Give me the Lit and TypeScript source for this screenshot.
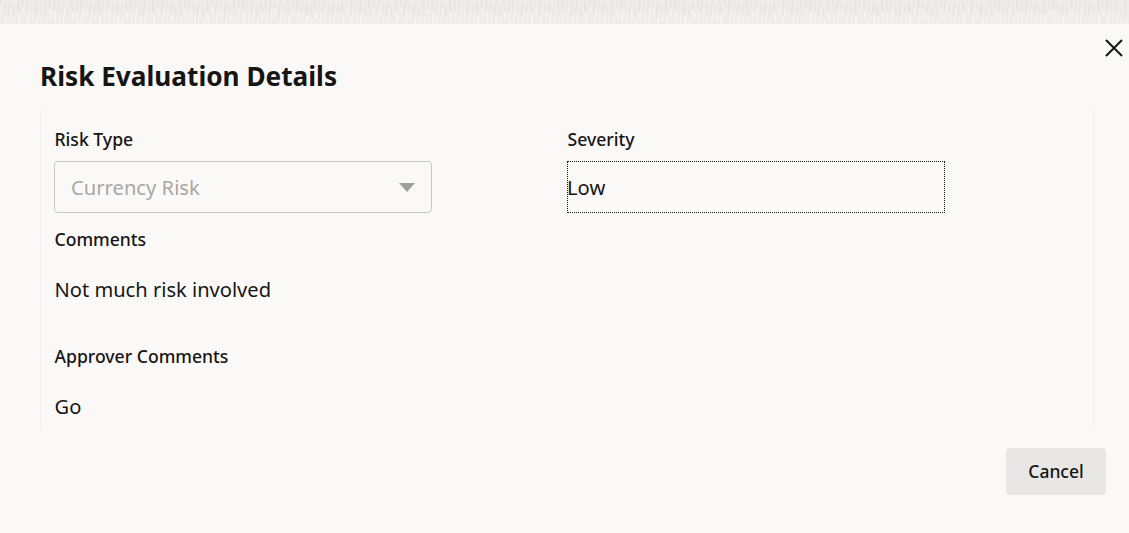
import { LitElement, html, svg, css } from 'lit';
import { customElement } from 'lit/decorators.js';

// rough stand-in for the page texture behind the dialog
const marks = Array.from({ length: 376 }, (_, i) => {
  const x = i * 3 + (i * 7) % 3;
  const y = ((i * 13) % 9) - 2;
  const h = 6 + (i * 5) % 7;
  return { x, y, h, second: y + h + 3 + (i * 3) % 3 };
});

@customElement('app-root')
export class AppRoot extends LitElement {
  static styles = css`
    :host {
      display: block;
      width: 1129px;
      height: 533px;
      overflow: hidden;
      font-family: "Noto Sans", "Open Sans", sans-serif;
      color: #161513;
      background: #fbf9f8;
    }
    .texture {
      display: block;
      width: 1129px;
      height: 24px;
      background: #efedeb;
    }
    .dialog {
      position: relative;
      height: 509px;
      box-sizing: border-box;
      padding: 34px 22px 0 40px;
      background: #fbf9f8;
    }
    .close {
      position: absolute;
      top: 15px;
      right: 6px;
      width: 18px;
      height: 18px;
      color: #161513;
    }
    h1 {
      margin: 0;
      font-size: 26.2px;
      line-height: 36px;
      font-weight: 700;
    }
    .body {
      margin-top: 15px;
      width: 1054px;
      height: 320px;
      box-sizing: border-box;
      padding: 0 13px;
      border-left: 1px solid #f1efed;
      border-right: 1px solid #f1efed;
    }
    .row {
      display: grid;
      grid-template-columns: 378px 378px;
      column-gap: 135px;
      padding-top: 19px;
    }
    label {
      display: block;
      font-size: 17.6px;
      line-height: 22px;
      font-weight: 500;
      padding-left: 0.5px;
    }
    .select {
      display: flex;
      align-items: center;
      justify-content: space-between;
      box-sizing: border-box;
      height: 52px;
      margin-top: 11px;
      padding: 0 16px;
      border: 1px solid #c9c7c5;
      border-radius: 4px;
      font-size: 20.2px;
      color: #a9a7a5;
    }
    .arrow {
      width: 16px;
      height: 9px;
      fill: #a09e9c;
    }
    .readonly {
      box-sizing: border-box;
      height: 52px;
      margin-top: 11px;
      border: 1px dotted #161513;
      display: flex;
      align-items: center;
      font-size: 20.2px;
      text-indent: -1px;
    }
    .block {
      margin-top: 15px;
    }
    .value {
      font-size: 20.1px;
      line-height: 28px;
      margin-top: 26px;
      padding-left: 0.5px;
    }
    .block.approver {
      margin-top: 41px;
    }
    .footer {
      display: flex;
      justify-content: flex-end;
      margin-top: 19px;
      padding-right: 1px;
    }
    button {
      width: 100px;
      height: 47px;
      border: none;
      border-radius: 4px;
      background: #e9e7e5;
      color: #161513;
      font: 500 17.5px "Noto Sans", "Open Sans", sans-serif;
      padding: 0 0 2px;
    }
  `;

  render() {
    return html`
      <svg class="texture" viewBox="0 0 1129 24">
        ${marks.map(
          (m) => svg`
            <rect x=${m.x} y=${m.y} width="1.4" height=${m.h} fill="#e7e5e3"></rect>
            <rect x=${m.x + 1} y=${m.second} width="1.2" height=${m.h} fill="#fbf9f8" opacity="0.6"></rect>
          `
        )}
      </svg>
      <div class="dialog">
        <svg class="close" viewBox="0 0 18 18" fill="none" stroke="currentColor" stroke-width="2">
          <path d="M1 1l16 16M17 1L1 17"></path>
        </svg>
        <h1>Risk Evaluation Details</h1>
        <div class="body">
          <div class="row">
            <div>
              <label>Risk Type</label>
              <div class="select">
                Currency Risk
                <svg class="arrow" viewBox="0 0 16 9"><path d="M0 0h16l-8 9z"></path></svg>
              </div>
            </div>
            <div>
              <label>Severity</label>
              <div class="readonly">Low</div>
            </div>
          </div>
          <div class="block">
            <label>Comments</label>
            <div class="value">Not much risk involved</div>
          </div>
          <div class="block approver">
            <label>Approver Comments</label>
            <div class="value">Go</div>
          </div>
        </div>
        <div class="footer"><button>Cancel</button></div>
      </div>
    `;
  }
}
